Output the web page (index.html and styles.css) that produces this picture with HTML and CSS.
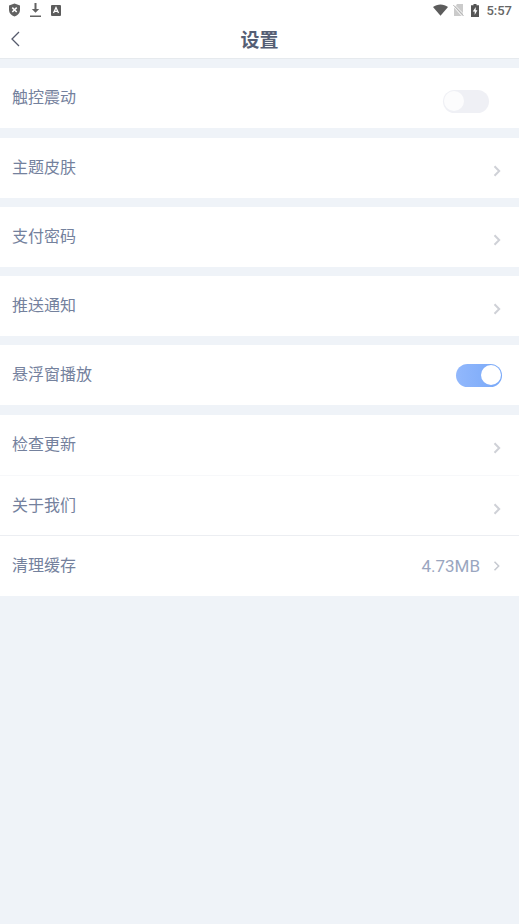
FILE: index.html
```html
<!DOCTYPE html>
<html lang="zh-CN">
<head>
<meta charset="utf-8">
<meta name="viewport" content="width=device-width, initial-scale=1">
<title>设置</title>
<link rel="stylesheet" href="styles.css">
</head>
<body>
<header class="top">
  <div class="status">
    <div class="status-left">
      <svg width="11" height="14" viewBox="0 0 11 14"><path fill="#626262" d="M5.500.5 11 2.500v4.500c0 3-2.300 5.400-5.500 6.500C2.300 12.400 0 10 0 7V2.500z"/><path stroke="#fff" stroke-width="1.500" d="m3.300 4.600 4.400 4.400m0-4.400L3.300 9"/></svg>
      <svg width="11" height="14" viewBox="0 0 11 14"><path fill="#626262" d="M4.500 0h2v6h2.700L5.500 9.700 1.800 6h2.700zM0 12.500h11V14H0z"/></svg>
      <svg width="10" height="11" viewBox="0 0 10 11"><rect width="10" height="11" rx="1" fill="#5c5c5c"/><path fill="none" stroke="#fff" stroke-width="1.300" d="M2.500 8 5 2.500 7.500 8M3.500 6.300h3"/></svg>
    </div>
    <div class="status-right">
      <svg width="15" height="12" viewBox="0 0 16 12"><path fill="#5c5c5c" d="M0 2.800C4.500-.9 11.500-.9 16 2.800L8 12z"/></svg>
      <svg class="sim" width="11" height="12" viewBox="0 0 11 12"><path fill="#cbcbcb" d="M4 0h6v9L3 1.500zM1 3.500 8.500 12H1z"/><path fill="#dcdcdc" d="M1.500 3 3 1.500l7 7.500v3H9z"/><path stroke="#b5b5b5" d="m.3 1 10.200 10.700"/></svg>
      <svg class="battery" width="8" height="13" viewBox="0 0 8 13"><path fill="#555" d="M2.500 0h3v1.300H8V13H0V1.300h2.500z"/><path fill="#fff" d="M4.700 3 1.800 7.500h1.900V11l2.700-4.700H4.700z"/></svg>
      <time class="clock">5:57</time>
    </div>
  </div>
  <nav class="bar">
    <button class="back" type="button" aria-label="返回"><svg width="10" height="16" viewBox="0 0 10 16"><path fill="none" stroke="#555a6c" stroke-width="1.300" d="M9 1 2 8l7 7"/></svg></button>
    <h1 class="title">设置</h1>
  </nav>
</header>
<main class="settings">
  <section class="card card-switch">
    <div class="row"><label for="haptic">触控震动</label><input class="switch switch-inset" id="haptic" type="checkbox" role="switch"></div>
  </section>
  <section class="card">
    <a class="row" href="#theme">主题皮肤<svg class="chevron chevron-low" viewBox="0 0 8 12"><path d="m1.500 1.200 4.700 4.800-4.700 4.800"/></svg></a>
  </section>
  <section class="card">
    <a class="row" href="#password">支付密码<svg class="chevron chevron-low" viewBox="0 0 8 12"><path d="m1.500 1.200 4.700 4.800-4.700 4.800"/></svg></a>
  </section>
  <section class="card">
    <a class="row" href="#push">推送通知<svg class="chevron chevron-low" viewBox="0 0 8 12"><path d="m1.500 1.200 4.700 4.800-4.700 4.800"/></svg></a>
  </section>
  <section class="card card-switch">
    <div class="row"><label for="floating">悬浮窗播放</label><input class="switch" id="floating" type="checkbox" role="switch" checked></div>
  </section>
  <section class="card">
    <a class="row" href="#update">检查更新<svg class="chevron chevron-low" viewBox="0 0 8 12"><path d="m1.500 1.200 4.700 4.800-4.700 4.800"/></svg></a>
    <a class="row" href="#about">关于我们<svg class="chevron chevron-low" viewBox="0 0 8 12"><path d="m1.500 1.200 4.700 4.800-4.700 4.800"/></svg></a>
    <a class="row row-ruled" href="#cache">清理缓存<span class="value">4.73MB</span><svg class="chevron chevron-thin" viewBox="0 0 8 12"><path d="m1.500 1.800 4.200 4.200-4.200 4.200"/></svg></a>
  </section>
</main>
</body>
</html>
```
FILE: styles.css
```css
* {
  box-sizing: border-box;
}

body {
  margin: 0;
  min-height: 100vh;
  background: #eff3f8;
  color: #74819d;
  font: 16px/24px Roboto, "Noto Sans CJK SC", sans-serif;
}

svg {
  display: block;
  flex: none;
}

.top {
  background: #fff;
  border-bottom: 1px solid #e6eaee;
}

.status {
  display: flex;
  justify-content: space-between;
  height: 20px;
  padding: 0 7px 0 9px;
}

.status-left,
.status-right {
  display: flex;
  align-items: center;
}

.status-left {
  gap: 10px;
}

.sim {
  margin-left: 5px;
}

.battery {
  margin-left: 7px;
}

.clock {
  margin-left: 7px;
  padding-top: 2px;
  color: #666;
  font-size: 13px;
  font-weight: 500;
  line-height: 20px;
}

.bar {
  display: grid;
  grid-template-columns: 40px 1fr 40px;
  align-items: center;
  height: 38px;
}

.back {
  display: flex;
  align-items: center;
  height: 38px;
  padding: 0 0 0 10px;
  border: 0;
  background: none;
}

.title {
  margin: 0;
  padding-top: 4px;
  color: #555e74;
  font-size: 19px;
  font-weight: 700;
  line-height: 24px;
  text-align: center;
}

.settings {
  padding-top: 9px;
}

.card {
  margin-bottom: 9px;
  background: #fff;
}

.card-switch {
  margin-bottom: 10px;
}

.row {
  display: flex;
  align-items: center;
  justify-content: space-between;
  height: 60px;
  padding: 0 17px 0 12px;
  color: inherit;
  text-decoration: none;
}

.row + .row {
  border-top: 1px solid #f7f8fa;
}

.row + .row-ruled {
  height: 61px;
  border-top-color: #eceef2;
}

.chevron {
  width: 8px;
  height: 12px;
  margin-right: 1px;
  fill: none;
  stroke: #cfd1d7;
  stroke-width: 2;
}

.chevron-low {
  height: 18px;
  padding-top: 6px;
}

.chevron-thin {
  stroke-width: 1.5px;
  stroke: #c6c9d0;
}

.value {
  margin-left: auto;
  margin-right: 13px;
  color: #9aa6bf;
  font-size: 17px;
}

.switch {
  appearance: none;
  display: flex;
  align-items: center;
  width: 46px;
  height: 23px;
  margin: 0;
  padding: 0 1px;
  border-radius: 12px;
  background: #eff0f5;
}

.switch::before {
  content: "";
  width: 20px;
  height: 20px;
  border-radius: 50%;
  background: #fcfcfd;
}

.switch:checked {
  justify-content: flex-end;
  background: linear-gradient(90deg, #92b8fc, #78a8f8);
}

.switch:checked::before {
  background: #fff;
}

.switch-inset {
  margin: 6px 13px 0 0;
}
```
